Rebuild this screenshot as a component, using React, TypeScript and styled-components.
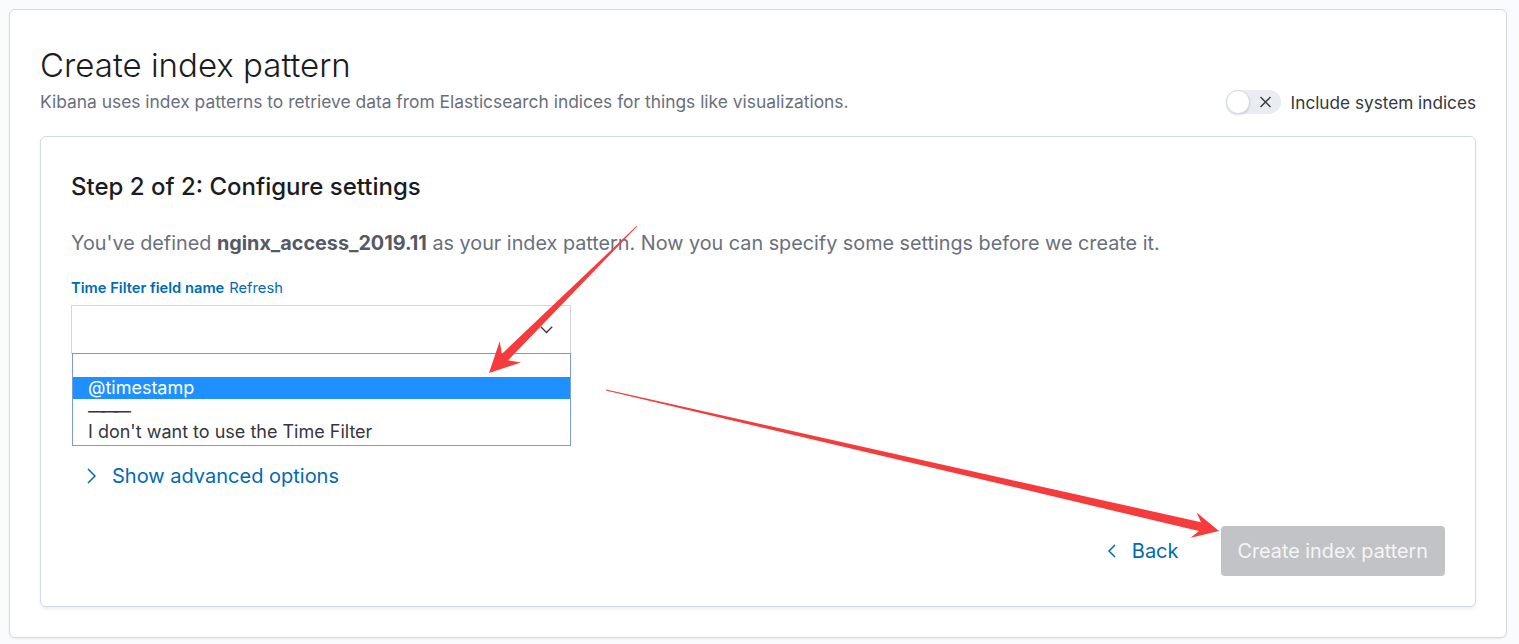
import React from "react";
import styled, { createGlobalStyle } from "styled-components";

const GlobalStyle = createGlobalStyle`
  html, body { margin: 0; padding: 0; }
  body {
    background: #fafbfd;
    font-family: Inter, "Noto Sans", "Liberation Sans", sans-serif;
    color: #343741;
  }
  * { box-sizing: border-box; }
`;

const Page = styled.div`
  position: relative;
  padding: 9px 12px 7px 9px;
`;

const OuterPanel = styled.div`
  background: #fff;
  border: 1px solid #d3dae6;
  border-radius: 6px;
  box-shadow: 0 1px 2px rgba(152, 162, 179, 0.15);
  padding: 30px;
`;

const Header = styled.div`
  display: flex;
  justify-content: space-between;
  align-items: flex-end;
`;

const TitleBlock = styled.div`
  display: flex;
  flex-direction: column;
`;

const Title = styled.h1`
  margin: 1px 0 0;
  font-size: 33px;
  line-height: 48px;
  font-weight: 300;
  color: #1a1c21;
`;

const Subtitle = styled.p`
  margin: 0;
  font-size: 17.4px;
  line-height: 26px;
  color: #69707d;
`;

const SwitchRow = styled.label`
  display: flex;
  align-items: center;
  gap: 10px;
  height: 26px;
  font-size: 17.2px;
  color: #343741;
`;

const SwitchTrack = styled.span`
  position: relative;
  display: flex;
  align-items: center;
  justify-content: flex-end;
  width: 55px;
  height: 24px;
  border-radius: 12px;
  background: #e9edf3;
  padding-right: 9px;
`;

const SwitchThumb = styled.span`
  position: absolute;
  left: 0;
  top: 0;
  width: 24px;
  height: 24px;
  border-radius: 50%;
  background: #fff;
  border: 1px solid #d3dae6;
  box-shadow: 0 1px 2px rgba(0, 0, 0, 0.15);
`;

const InnerPanel = styled.div`
  margin-top: 21px;
  background: #fff;
  border: 1px solid #d3dae6;
  border-radius: 6px;
  box-shadow: 0 2px 3px rgba(152, 162, 179, 0.18);
  padding: 30px;
`;

const StepTitle = styled.h2`
  margin: 0;
  font-size: 24px;
  line-height: 40px;
  font-weight: 500;
  color: #1a1c21;
`;

const Description = styled.p`
  margin: 21px 0 0;
  font-size: 19.8px;
  line-height: 30px;
  color: #69707d;

  strong {
    color: #535966;
    font-weight: 700;
  }
`;

const LabelRow = styled.div`
  margin-top: 20px;
  display: flex;
  gap: 5px;
  font-size: 14.7px;
  line-height: 20px;
`;

const FieldLabel = styled.span`
  font-weight: 600;
  color: #006bb4;
`;

const LinkText = styled.span`
  color: #006bb4;
`;

const SelectWrap = styled.div`
  position: relative;
  margin-top: 7px;
  width: 500px;
`;

const SelectBox = styled.div`
  height: 49px;
  border: 1px solid #d6d6d6;
  background: #fff;
  display: flex;
  align-items: center;
  justify-content: flex-end;
  padding-right: 17px;
`;

const DropList = styled.div`
  position: absolute;
  top: 48px;
  left: 1px;
  width: 499px;
  height: 93px;
  border: 1px solid #7b9bd3;
  background: #fff;
  padding-top: 1px;
  z-index: 2;
`;

const Option = styled.div<{ $active?: boolean }>`
  height: 22px;
  line-height: 22px;
  padding-left: 15px;
  font-size: 18px;
  color: ${(p) => (p.$active ? "#fff" : "#343741")};
  background: ${(p) => (p.$active ? "#1e90ff" : "transparent")};
  white-space: nowrap;
`;

const Divider = styled.div`
  height: 22px;
  line-height: 24px;
  padding-left: 15px;
  font-size: 17px;
  color: #343741;
  letter-spacing: -4px;
`;

const AdvancedToggle = styled.div`
  margin-top: 109px;
  display: flex;
  align-items: center;
  gap: 16px;
  padding-left: 16px;
  font-size: 20px;
  line-height: 26px;
  color: #006bb4;
`;

const Footer = styled.div`
  margin-top: 37px;
  display: flex;
  justify-content: flex-end;
  align-items: center;
`;

const BackButton = styled.button`
  display: flex;
  align-items: center;
  gap: 16px;
  height: 50px;
  border: none;
  background: none;
  padding: 0;
  margin-right: 42px;
  font-family: inherit;
  font-size: 20px;
  color: #006bb4;
`;

const PrimaryButton = styled.button`
  height: 50px;
  padding: 0 17px;
  border: none;
  border-radius: 4px;
  background: #c2c3c6;
  color: #f5f5f5;
  font-family: inherit;
  font-size: 19.8px;
  font-weight: 400;
`;

const Overlay = styled.svg`
  position: absolute;
  top: 0;
  left: 0;
  pointer-events: none;
  z-index: 5;
`;

type Pt = [number, number];

function arrowPoints(tail: Pt, tip: Pt, headLen: number, headW: number, shaftW: number): string {
  const dx = tip[0] - tail[0];
  const dy = tip[1] - tail[1];
  const len = Math.hypot(dx, dy);
  const ux = dx / len;
  const uy = dy / len;
  const nx = -uy;
  const ny = ux;
  const base: Pt = [tip[0] - ux * headLen, tip[1] - uy * headLen];
  const neck: Pt = [tip[0] - ux * headLen * 0.75, tip[1] - uy * headLen * 0.75];
  const pts: Pt[] = [
    [tail[0] + nx * 0.4, tail[1] + ny * 0.4],
    [neck[0] + nx * shaftW / 2, neck[1] + ny * shaftW / 2],
    [base[0] + nx * headW / 2, base[1] + ny * headW / 2],
    tip,
    [base[0] - nx * headW / 2, base[1] - ny * headW / 2],
    [neck[0] - nx * shaftW / 2, neck[1] - ny * shaftW / 2],
    [tail[0] - nx * 0.4, tail[1] - ny * 0.4],
  ];
  return pts.map((p) => `${p[0].toFixed(1)},${p[1].toFixed(1)}`).join(" ");
}

export default function App() {
  return (
    <>
      <GlobalStyle />
      <Page>
        <OuterPanel>
          <Header>
            <TitleBlock>
              <Title>Create index pattern</Title>
              <Subtitle>
                Kibana uses index patterns to retrieve data from Elasticsearch indices for things like visualizations.
              </Subtitle>
            </TitleBlock>
            <SwitchRow>
              <SwitchTrack>
                <SwitchThumb />
                <svg width="13" height="12" viewBox="0 0 13 12">
                  <path d="M1.5 1 L11.5 11 M11.5 1 L1.5 11" stroke="#343741" strokeWidth="1.4" fill="none" />
                </svg>
              </SwitchTrack>
              Include system indices
            </SwitchRow>
          </Header>

          <InnerPanel>
            <StepTitle>Step 2 of 2: Configure settings</StepTitle>
            <Description>
              You've defined <strong>nginx_access_2019.11</strong> as your index pattern. Now you can specify some
              settings before we create it.
            </Description>
            <LabelRow>
              <FieldLabel>Time Filter field name</FieldLabel>
              <LinkText>Refresh</LinkText>
            </LabelRow>
            <SelectWrap>
              <SelectBox>
                <svg width="13" height="8" viewBox="0 0 13 8">
                  <path d="M0.8 0.8 L6.5 6.5 L12.2 0.8" stroke="#343741" strokeWidth="1.3" fill="none" />
                </svg>
              </SelectBox>
              <DropList>
                <Option> </Option>
                <Option $active>@timestamp</Option>
                <Divider>———</Divider>
                <Option>I don't want to use the Time Filter</Option>
              </DropList>
            </SelectWrap>

            <AdvancedToggle>
              <svg width="9" height="16" viewBox="0 0 9 16">
                <path d="M1 1 L8 8 L1 15" stroke="#006bb4" strokeWidth="1.5" fill="none" />
              </svg>
              Show advanced options
            </AdvancedToggle>

            <Footer>
              <BackButton>
                <svg width="9" height="14" viewBox="0 0 9 14">
                  <path d="M8 1 L2 7 L8 13" stroke="#006bb4" strokeWidth="1.5" fill="none" />
                </svg>
                Back
              </BackButton>
              <PrimaryButton>Create index pattern</PrimaryButton>
            </Footer>
          </InnerPanel>
        </OuterPanel>

        <Overlay width="1519" height="644" viewBox="0 0 1519 644">
          <polygon points={arrowPoints([637, 226], [489, 373], 30, 30, 9)} fill="#f53b3b" />
          <polygon points={arrowPoints([606, 390], [1219, 531], 26, 26, 9)} fill="#f53b3b" />
        </Overlay>
      </Page>
    </>
  );
}
